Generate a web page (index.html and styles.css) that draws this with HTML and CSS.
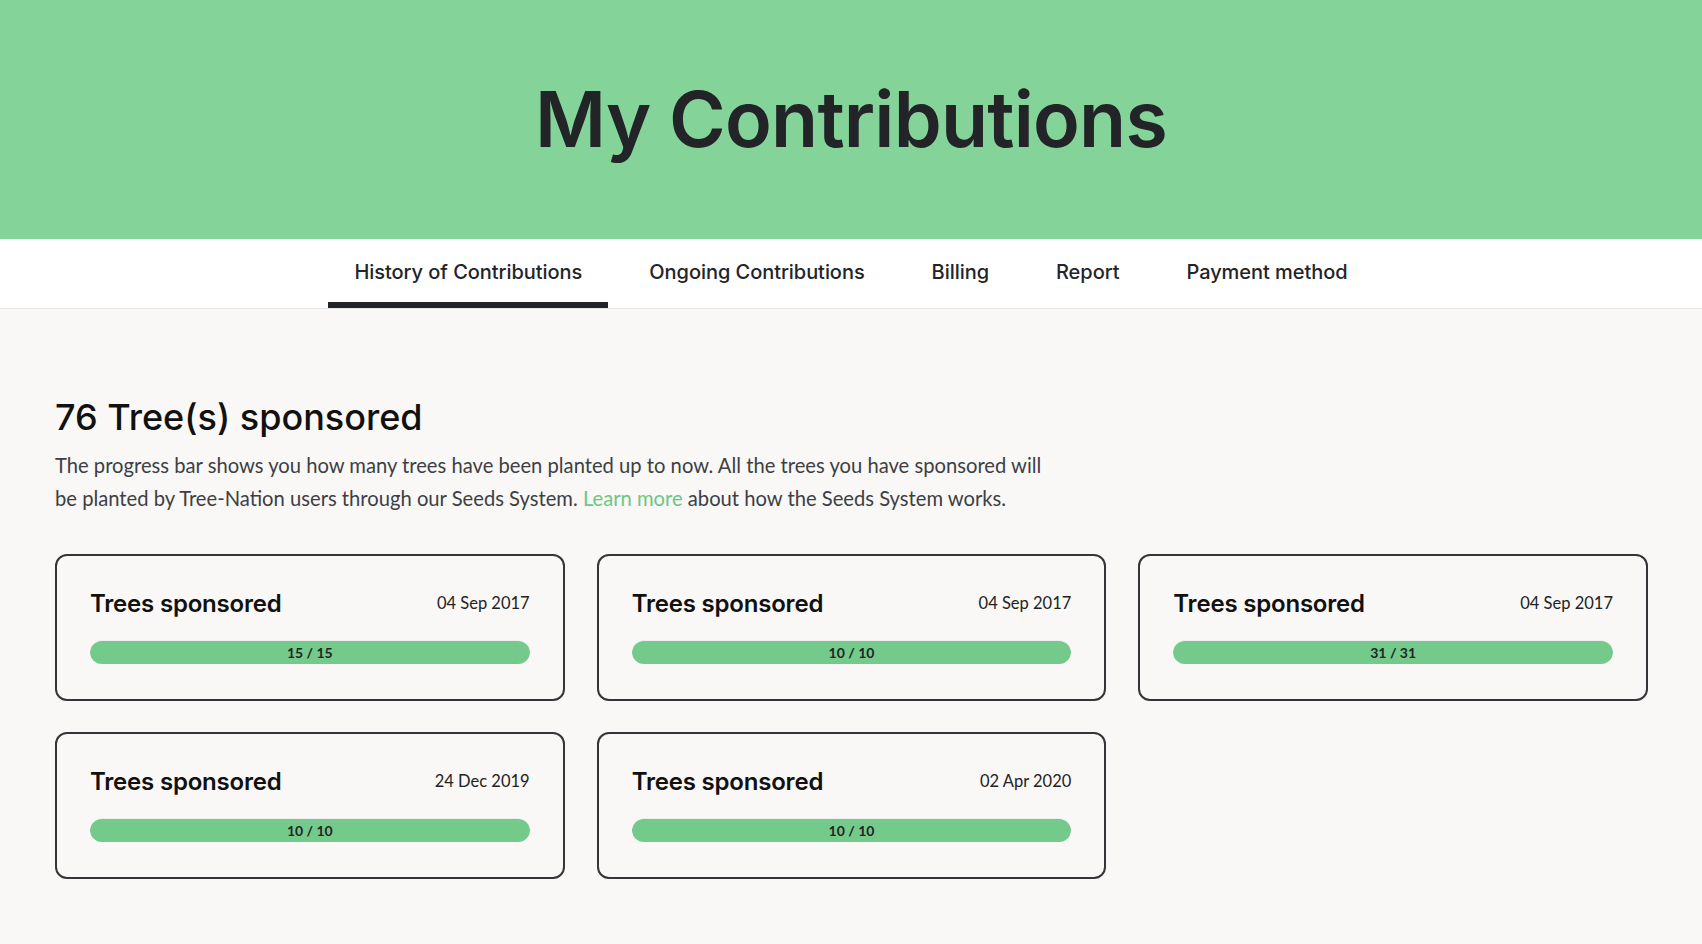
FILE: index.html
```html
<!DOCTYPE html>
<html lang="en">
<head>
<meta charset="utf-8">
<title>My Contributions</title>
<link rel="stylesheet" href="styles.css">
</head>
<body>
<header class="hero">
  <h1 class="hero-title">My Contributions</h1>
</header>
<nav class="tabs">
  <a class="tab active" href="#">History of Contributions</a>
  <a class="tab" href="#">Ongoing Contributions</a>
  <a class="tab" href="#">Billing</a>
  <a class="tab" href="#">Report</a>
  <a class="tab" href="#">Payment method</a>
</nav>
<main class="content">
  <h2 class="summary-title">76 Tree(s) sponsored</h2>
  <p class="summary-text">The progress bar shows you how many trees have been planted up to now. All the trees you have sponsored will be planted by Tree-Nation users through our Seeds System. <a class="link" href="#">Learn more</a> about how the Seeds System works.</p>
  <div class="cards">
    <div class="card">
      <div class="card-head"><span class="card-title">Trees sponsored</span><span class="card-date">04 Sep 2017</span></div>
      <div class="bar"><div class="bar-fill" style="width:100%">15 / 15</div></div>
    </div>
    <div class="card">
      <div class="card-head"><span class="card-title">Trees sponsored</span><span class="card-date">04 Sep 2017</span></div>
      <div class="bar"><div class="bar-fill" style="width:100%">10 / 10</div></div>
    </div>
    <div class="card">
      <div class="card-head"><span class="card-title">Trees sponsored</span><span class="card-date">04 Sep 2017</span></div>
      <div class="bar"><div class="bar-fill" style="width:100%">31 / 31</div></div>
    </div>
    <div class="card">
      <div class="card-head"><span class="card-title">Trees sponsored</span><span class="card-date">24 Dec 2019</span></div>
      <div class="bar"><div class="bar-fill" style="width:100%">10 / 10</div></div>
    </div>
    <div class="card">
      <div class="card-head"><span class="card-title">Trees sponsored</span><span class="card-date">02 Apr 2020</span></div>
      <div class="bar"><div class="bar-fill" style="width:100%">10 / 10</div></div>
    </div>
  </div>
</main>
</body>
</html>
```
FILE: styles.css
```css
* { box-sizing: border-box; }
html, body { margin: 0; padding: 0; }
body {
  background: #f9f8f6;
  font-family: Inter, "Noto Sans", sans-serif;
  color: #222428;
}
.hero {
  background: #84d49a;
  height: 239px;
  display: flex;
  align-items: center;
  justify-content: center;
}
.hero-title {
  margin: 0;
  font-family: Inter, sans-serif;
  font-weight: 600;
  font-size: 77px;
  letter-spacing: -0.8px;
  color: #222428;
  padding-bottom: 2px;
}
.tabs {
  background: #fff;
  height: 70px;
  border-bottom: 1px solid #e6e6e6;
  display: flex;
  justify-content: center;
  gap: 15px;
}
.tab {
  display: flex;
  align-items: center;
  padding: 2px 26px 0;
  height: 69px;
  font-size: 20px;
  font-weight: 500;
  letter-spacing: -0.05px;
  color: #222428;
  text-decoration: none;
  border-bottom: 6px solid transparent;
}
.tab.active { border-bottom-color: #222428; }
.content {
  padding: 87px 54px 60px 55px;
}
.summary-title {
  margin: 0;
  font-size: 36px;
  line-height: 42px;
  font-weight: 500;
  letter-spacing: 0;
  color: #111;
}
.summary-text {
  margin: 11px 0 0;
  max-width: 1000px;
  font-family: Lato, "Open Sans", sans-serif;
  font-size: 20.2px;
  line-height: 32.5px;
  color: #3d3f44;
}
.link { color: #6cc785; text-decoration: none; }
.cards {
  margin-top: 40px;
  display: grid;
  grid-template-columns: repeat(3, 1fr);
  column-gap: 32px;
  row-gap: 31px;
}
.card {
  border: 2px solid #343539;
  border-radius: 12px;
  padding: 32px 33px 33px;
  height: 147px;
}
.card-head {
  display: flex;
  justify-content: space-between;
  align-items: center;
  height: 30px;
}
.card-title {
  font-size: 24px;
  font-weight: 600;
  letter-spacing: -0.2px;
  color: #111;
}
.card-date {
  font-family: Lato, "Open Sans", sans-serif;
  font-size: 16.5px;
  color: #222;
}
.bar {
  margin-top: 22px;
  height: 24px;
  border-radius: 12px;
  background: #eceef0;
  overflow: hidden;
}
.bar-fill {
  height: 24px;
  margin-top: 1px;
  border-radius: 12px;
  background: #74ca8a;
  font-family: Lato, "Open Sans", sans-serif;
  font-weight: 700;
  font-size: 14px;
  line-height: 23px;
  text-align: center;
  color: #222428;
}
```
